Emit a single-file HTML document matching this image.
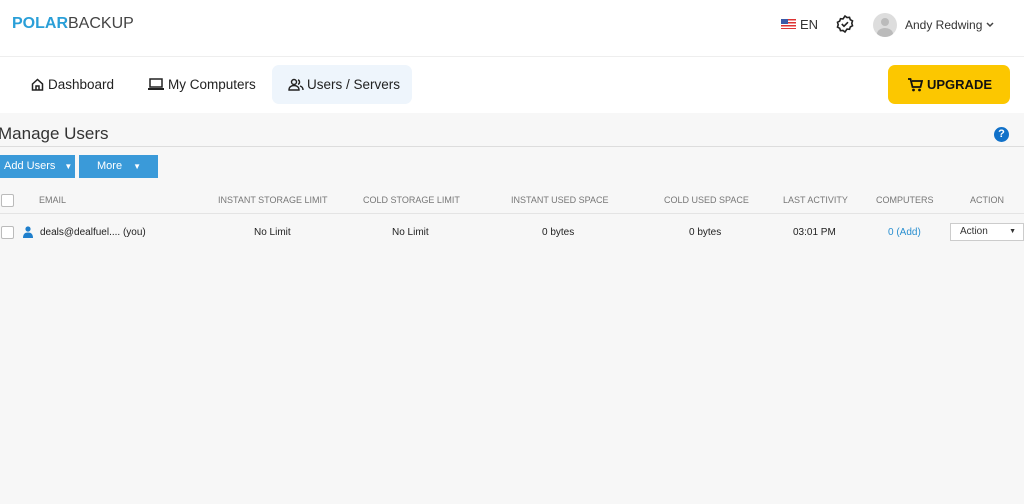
<!DOCTYPE html>
<html><head><meta charset="utf-8"><style>
*{box-sizing:border-box;margin:0;padding:0}
body{width:1024px;height:504px;overflow:hidden;background:#f7f7f7;font-family:"Liberation Sans",sans-serif;color:#333;position:relative}
.top{position:absolute;left:0;top:0;width:1024px;height:113px;background:#fff}
.hl{position:absolute;left:0;top:56px;width:1024px;height:1px;background:#eee}
.abs{position:absolute;white-space:nowrap}
.logo{left:12px;top:15px;font-size:16px;letter-spacing:0}
.nav{top:77px;font-size:13.5px;color:#222}
.tab{left:272px;top:65px;width:140px;height:39px;background:#eef5fc;border-radius:7px}
.up{left:888px;top:65px;width:122px;height:39px;background:#fcc700;border-radius:7px;font-weight:bold;font-size:13px;color:#111;line-height:39px;text-align:left;padding-left:39px}
.th{top:195px;font-size:9px;color:#777}
.td{top:227px;font-size:10px;color:#222}
.btn{top:155px;height:23px;background:#3a9ad9;color:#fff;font-size:11px;line-height:23px}
.cb{width:13px;height:13px;border:1px solid #bbb;background:#fff;border-radius:2px}
</style></head><body>
<div class="top"></div><div class="hl"></div>
<div class="abs logo"><b style="color:#2a9fd8">POLAR</b><span style="color:#444">BACKUP</span></div>
<div class="abs" style="left:781px;top:19px;width:15px;height:10px;background:repeating-linear-gradient(#d33 0 1.5px,#fff 1.5px 3px)"><div style="width:7px;height:5px;background:#3b5aa8"></div></div>
<div class="abs" style="left:800px;top:17px;font-size:13px">EN</div>
<svg class="abs" style="left:835px;top:14px" width="20" height="20" viewBox="0 0 20 20"><path d="M10 2l2 1.5 2.5-.2.8 2.4 2.2 1.2-.7 2.4.7 2.4-2.2 1.2-.8 2.4-2.5-.2L10 18l-2-1.5-2.5.2-.8-2.4-2.2-1.2.7-2.4-.7-2.4 2.2-1.2.8-2.4 2.5.2z" fill="none" stroke="#222" stroke-width="1.6"/><path d="M6.8 10l2.2 2.2 4-4" fill="none" stroke="#222" stroke-width="1.6"/></svg>
<div class="abs" style="left:873px;top:13px;width:24px;height:24px;border-radius:50%;background:#ddd;overflow:hidden"><div style="position:absolute;left:8px;top:5px;width:8px;height:8px;border-radius:50%;background:#bbb"></div><div style="position:absolute;left:4px;top:15px;width:16px;height:12px;border-radius:50%;background:#bbb"></div></div>
<div class="abs" style="left:905px;top:18px;font-size:12px;color:#333">Andy Redwing</div>
<svg class="abs" style="left:985px;top:21px" width="10" height="8"><path d="M2 2l3 3 3-3" fill="none" stroke="#444" stroke-width="1.5"/></svg>
<div class="abs tab"></div>
<svg class="abs" style="left:31px;top:78px" width="13" height="13" viewBox="0 0 13 13"><path d="M1.5 6L6.5 1.5 11.5 6V12H1.5z M5 12V8h3v4" fill="none" stroke="#222" stroke-width="1.5"/></svg>
<div class="abs nav" style="left:48px">Dashboard</div>
<svg class="abs" style="left:148px;top:78px" width="16" height="13"><rect x="2" y="1" width="12" height="8" fill="none" stroke="#222" stroke-width="1.5"/><rect x="0" y="10" width="16" height="2" fill="#222"/></svg>
<div class="abs nav" style="left:168px">My Computers</div>
<svg class="abs" style="left:288px;top:78px" width="16" height="13"><circle cx="6" cy="4" r="2.5" fill="none" stroke="#222" stroke-width="1.4"/><path d="M1 12c0-3 2-4.5 5-4.5s5 1.5 5 4.5z" fill="none" stroke="#222" stroke-width="1.4"/><path d="M10 1.8a2.5 2.5 0 010 4.6M12 8c2 .5 3 2 3 4" fill="none" stroke="#222" stroke-width="1.4"/></svg>
<div class="abs nav" style="left:307px">Users / Servers</div>
<div class="abs up">UPGRADE</div>
<svg class="abs" style="left:907px;top:77px" width="16" height="15"><path d="M1 2h2.5l2 8h8l1.5-6H5" fill="none" stroke="#111" stroke-width="1.8"/><circle cx="6.5" cy="13" r="1.4" fill="#111"/><circle cx="12.5" cy="13" r="1.4" fill="#111"/></svg>
<div class="abs" style="left:-2px;top:124px;font-size:17px;color:#333">Manage Users</div>
<div class="abs" style="left:994px;top:127px;width:15px;height:15px;border-radius:50%;background:#1171c9;color:#fff;font-size:11px;font-weight:bold;text-align:center;line-height:15px">?</div>
<div class="abs" style="left:0;top:146px;width:1024px;height:1px;background:#ddd"></div>
<div class="abs btn" style="left:0;width:75px;padding-left:4px">Add Users <span style="font-size:8px;margin-left:6px">▼</span></div>
<div class="abs btn" style="left:79px;width:79px;padding-left:18px">More <span style="font-size:8px;margin-left:8px">▼</span></div>
<div class="abs cb" style="left:1px;top:194px"></div>
<div class="abs th" style="left:39px">EMAIL</div>
<div class="abs th" style="left:218px">INSTANT STORAGE LIMIT</div>
<div class="abs th" style="left:363px">COLD STORAGE LIMIT</div>
<div class="abs th" style="left:511px">INSTANT USED SPACE</div>
<div class="abs th" style="left:664px">COLD USED SPACE</div>
<div class="abs th" style="left:783px">LAST ACTIVITY</div>
<div class="abs th" style="left:876px">COMPUTERS</div>
<div class="abs th" style="left:970px">ACTION</div>
<div class="abs" style="left:0;top:213px;width:1024px;height:1px;background:#e4e4e4"></div>
<div class="abs cb" style="left:1px;top:226px"></div>
<svg class="abs" style="left:23px;top:226px" width="10" height="12"><circle cx="5" cy="3" r="2.6" fill="#1f7fcc"/><path d="M0 12c0-4 2-5.5 5-5.5s5 1.5 5 5.5z" fill="#1f7fcc"/></svg>
<div class="abs td" style="left:40px">deals@dealfuel.... (you)</div>
<div class="abs td" style="left:254px">No Limit</div>
<div class="abs td" style="left:392px">No Limit</div>
<div class="abs td" style="left:542px">0 bytes</div>
<div class="abs td" style="left:689px">0 bytes</div>
<div class="abs td" style="left:793px">03:01 PM</div>
<div class="abs td" style="left:888px;color:#2a8fd0">0 (Add)</div>
<div class="abs" style="left:950px;top:223px;width:74px;height:18px;background:#fff;border:1px solid #ccc;font-size:10px;line-height:16px;padding-left:9px;color:#333">Action<span style="position:absolute;right:7px;font-size:7px">▼</span></div>
</body></html>
